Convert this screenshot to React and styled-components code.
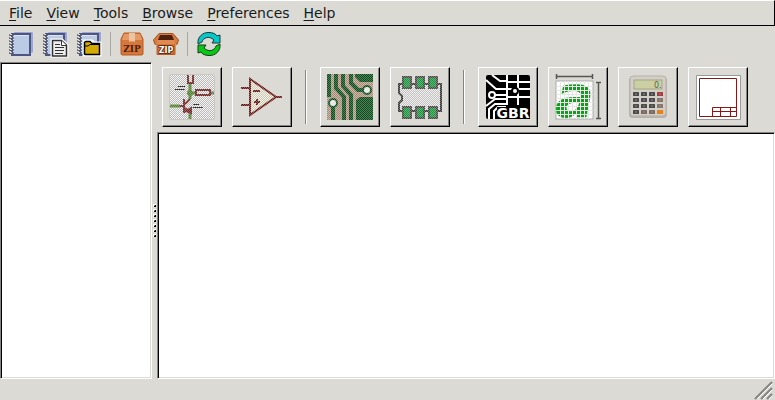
import React from "react";
import styled, { createGlobalStyle } from "styled-components";

const GlobalStyle = createGlobalStyle`
  * { box-sizing: border-box; }
  body { margin: 0; background: #dcdad5; }
`;

const Window = styled.div`
  display: flex;
  flex-direction: column;
  height: 100vh;
  overflow: hidden;
  background: #dcdad5;
  color: #1a1a1a;
  font: 14px/18px "DejaVu Sans", sans-serif;
`;

const MenuBar = styled.nav`
  display: flex;
  align-items: center;
  height: 26px;
  padding-left: 2px;
  border-top: 1px solid #fff;
  border-bottom: 1px solid #000;
  border-right: 1px solid #000;
`;

const MenuItem = styled.button`
  padding: 0 7px;
  border: 0;
  background: none;
  color: inherit;
  font: inherit;
`;

const Mnemonic = styled.span`
  text-decoration: underline;
  text-decoration-thickness: 1px;
  text-underline-offset: 2px;
  text-decoration-skip-ink: none;
`;

const Toolbar = styled.div`
  display: flex;
  align-items: center;
  gap: 10px;
  height: 36px;
  padding-left: 9px;
`;

const ToolButton = styled.button`
  display: flex;
  padding: 0;
  border: 0;
  background: none;
`;

const ToolSeparator = styled.span`
  width: 1px;
  height: 24px;
  margin: 0 -1px;
  background: #aaa8a4;
`;

const Workspace = styled.main`
  display: flex;
  flex: 1;
  min-height: 0;
`;

const Pane = styled.section`
  flex: ${(p) => (p.$width ? `0 0 ${p.$width}` : "1")};
  min-height: 0;
  background: #fff;
  border: 1px solid #fff;
  border-top-color: #868482;
  border-left-color: #868482;
  box-shadow: inset 1px 1px #000, inset -1px -1px #dcdad5;
`;

const Sash = styled.div`
  display: flex;
  flex-direction: column;
  align-items: center;
  justify-content: center;
  gap: 2px;
  width: 5px;
`;

const Grip = styled.span`
  width: 3px;
  height: 3px;
  background:
    linear-gradient(#868482, #868482) 1px 1px / 1px 1px no-repeat,
    linear-gradient(#000, #000) 1px 1px / 2px 2px no-repeat,
    #fff;
`;

const Content = styled.div`
  display: flex;
  flex: 1;
  flex-direction: column;
  min-width: 0;
`;

const Launcher = styled.div`
  display: flex;
  align-items: center;
  gap: 10px;
  height: 70px;
  padding-left: 5px;
`;

const LaunchButton = styled.button`
  display: flex;
  align-items: center;
  justify-content: center;
  width: 60px;
  height: 60px;
  padding: 0;
  border: 1px solid #000;
  border-top-color: #fff;
  border-left-color: #fff;
  background: #dcdad5;
  box-shadow: inset -1px -1px #868482;
`;

const LaunchSeparator = styled.span`
  width: 2px;
  height: 54px;
  margin: 0 3px;
  border-left: 1px solid #868482;
  border-right: 1px solid #fff;
`;

const StatusBar = styled.footer`
  display: flex;
  align-items: flex-end;
  justify-content: flex-end;
  height: 21px;
  padding: 0 3px 1px 0;
`;

const Icon = styled.svg.attrs((p) => ({
  viewBox: `0 0 ${p.$size} ${p.$size}`,
  width: p.$size,
  height: p.$size,
  "aria-hidden": true,
}))`
  display: block;
  overflow: visible;
`;

const Notebook = ({ children }) => (
  <Icon $size={24}>
    <path d="M5 0H24V21H22V2H5z" fill="#8b93c2" stroke="#dde0ee" strokeWidth=".5" />
    <rect x="3" y="2" width="18" height="21" fill="#bccbe5" stroke="#4d5584" strokeWidth="2" />
    <path d="M4.500 21.500V3.500H19.500" fill="none" stroke="#dde6f4" />
    {[3, 6, 9, 12, 15, 18, 21].map((y) => (
      <g key={y}>
        <rect x="0" y={y - 1} width="5" height="2" rx="1" fill="#55596c" />
        <path d={`M1 ${y - 0.5}h2`} stroke="#d5d7df" />
      </g>
    ))}
    {children}
  </Icon>
);

const NewFromTemplate = () => (
  <Notebook>
    <path d="M9 8H19L24 13V24H9z" fill="#fff" stroke="#fff" strokeWidth="3" />
    <path d="M9.500 8.500H18.500L23.500 13V24H9.500z" fill="#eee" stroke="#333" strokeWidth="1.500" />
    <path d="M18.500 8.500V13.500H23.500" fill="#fff" stroke="#333" />
    <path d="M12 12.500h5M12 15.500h9M12 18.500h9M12 21.500h8" stroke="#333" />
  </Notebook>
);

const OpenProject = () => (
  <Notebook>
    <path d="M7 9H15L17 11H23V23H7z" fill="#fff" stroke="#fff" strokeWidth="3" />
    <path d="M7.500 22V10.500L9 9.500H13L15 11.500H22.500V22.500H8.500z" fill="#d5aa05" stroke="#000" strokeWidth="1.500" />
    <path d="M8 14h3l2-1.500h9" fill="none" stroke="#000" />
  </Notebook>
);

const ZipBox = () => (
  <Icon $size={24}>
    <path d="M4 1H20L23 7V22L22 23H2L1 22V7z" fill="#d8773b" stroke="#b95a21" />
    <path d="M4 2H20L22 8H2z" fill="#e49a66" />
    <path d="M9 1h6v9l-2-1-1 1-1-1-2 1z" fill="#edc3a4" />
    <text x="12" y="20" textAnchor="middle" fill="#4d210b" fontFamily="DejaVu Serif" fontWeight="bold" fontSize="9">ZIP</text>
  </Icon>
);

const UnzipBox = () => (
  <Icon $size={24}>
    <path d="M3 11H21V22.500H3z" fill="#d8773b" stroke="#b95a21" />
    <path d="M5 1.500H19L24.500 8L23 12.500L21 11H3L1 12.500L-.500 8z" fill="#d77c42" stroke="#a84e19" />
    <path d="M6 3H18L20 8H4z" fill="#4d210b" />
    <path d="M4 8H20L22 12H2z" fill="#e08a50" />
    <path d="M4 13h16v9H4z" fill="#c96a30" />
    <text x="12" y="21" textAnchor="middle" fill="#fff" stroke="#4d210b" strokeWidth="1.500" paintOrder="stroke" fontFamily="DejaVu Sans" fontWeight="bold" fontSize="8">ZIP</text>
  </Icon>
);

const Refresh = () => (
  <Icon $size={24}>
    <path d="M1 12C0 5 6 0 12 .5C16 .5 19 2 20 4L23 3V11H15L17 8C12 3 6 6 5 10z" fill="#06c8c8" stroke="#183b3b" />
    <path d="M23 12C24 19 18 24 12 23.500C8 23.500 5 22 4 20L1 21V13H9L7 16C12 21 18 18 19 14z" fill="#06c815" stroke="#163c19" />
  </Icon>
);

const Stipple = ({ id, color = "#dcdad5", opacity = 0.8 }) => (
  <pattern id={id} width="2" height="2" patternUnits="userSpaceOnUse">
    <path d="M0 0h1v1H0zM1 1h1v1H1z" fill={color} opacity={opacity} shapeRendering="crispEdges" />
  </pattern>
);

const SchematicIcon = () => (
  <Icon $size={48}>
    <defs>
      <Stipple id="dots-schematic" color="#888" opacity={0.65} />
      <Stipple id="dots-schematic-top" opacity={0.3} />
    </defs>
    <rect x="1" y="1" width="46" height="46" rx="3" fill="#c9c8c5" />
    <rect x="2" y="2" width="44" height="44" rx="1" fill="#f6f6f6" />
    <rect x="2" y="2" width="44" height="44" fill="url(#dots-schematic)" />
    <g fill="none" strokeWidth="2">
      <path d="M22 11V26M22 20H27M43 20H46M2 33H12M22 41V46" stroke="#568536" strokeWidth="3" />
      <circle cx="22" cy="20" r="3" fill="#568536" stroke="none" />
      <path d="M20 2V10H25V2M28 17H42V22H28zM12 33H16M16 26V40M17 31L22 26M17 35L22 40" stroke="#762727" />
      <path d="M18 38L23 40V35z" fill="#762727" stroke="#762727" />
      <path d="M10 13.500H17M7 16.500H17M25 31.500H31M25 34.500H35" stroke="#222" strokeWidth="1" />
    </g>
    <path d="M2 2h44v44H2z" fill="url(#dots-schematic-top)" />
  </Icon>
);

const SymbolIcon = () => (
  <Icon $size={48}>
    <defs>
      <Stipple id="dots-symbol" color="#999482" opacity={0.6} />
      <Stipple id="dots-symbol-top" opacity={0.4} />
    </defs>
    <path d="M12 6V42L38 24z" fill="#f4f2e0" />
    <path d="M12 6V42L38 24z" fill="url(#dots-symbol)" />
    <g fill="none" stroke="#681212" strokeWidth="2">
      <path d="M12 6V42L38 24z" />
      <path d="M3 15H12M3 32H12M38 24H44M15 18H22M16 29H22M19 26V32" />
    </g>
    <path d="M0 0h48v48H0z" fill="url(#dots-symbol-top)" />
  </Icon>
);

const BoardIcon = () => (
  <Icon $size={48}>
    <defs><Stipple id="dots-board" opacity={0.35} /></defs>
    <path d="M1 1h46v46H1z" fill="#a98b73" />
    <path d="M1 1h46v46H1z" fill="url(#dots-board)" />
    <g fill="none" stroke="#0b4d1a" strokeWidth="4">
      <path d="M3 1V24M10 1V15L18 24V47M17 1V13L25 22V47M25 1V10L32 17H38M7 34V47" />
    </g>
    <path d="M29 1H47V9H34L29 4zM30 27L34 24H47V47H30z" fill="#0b4d1a" />
    <circle cx="41" cy="17" r="4" fill="#eee" stroke="#0b4d1a" strokeWidth="2" />
    <circle cx="7" cy="30" r="4" fill="#eee" stroke="#0b4d1a" strokeWidth="2" />
    <path d="M1 1h46v46H1z" fill="url(#dots-board)" />
  </Icon>
);

const FootprintIcon = () => (
  <Icon $size={48}>
    <defs>
      <Stipple id="dots-footprint" color="#888" opacity={0.6} />
      <Stipple id="dots-footprint-top" opacity={0.4} />
    </defs>
    <path d="M3 11H45V38H3V30L6 27V23L3 20z" fill="#f0f0f0" />
    <path d="M3 11H45V38H3V30L6 27V23L3 20z" fill="url(#dots-footprint)" stroke="#333" strokeWidth="2" />
    {[7, 20, 33].map((x) => (
      <g key={x} fill="#15983a" stroke="#474747" strokeWidth="2">
        <rect x={x} y="4" width="8" height="11" />
        <rect x={x} y="34" width="8" height="11" />
      </g>
    ))}
    <path d="M0 0h48v48H0z" fill="url(#dots-footprint-top)" />
  </Icon>
);

const GerberIcon = () => (
  <Icon $size={48}>
    <rect x="2" y="2" width="44" height="44" rx="2" fill="#000" />
    <path d="M8 2L16 8H22M2 7L12 16H22M11 22H22M2 33L11 26H22M5 46V36L11 31H22M10 46V38L14 34H22M23 2V32M34 2V32M23 9H46M23 16H46M23 24H46" fill="none" stroke="#fff" strokeWidth="2" />
    <circle cx="8" cy="22" r="3" fill="#000" stroke="#fff" strokeWidth="2" />
    <circle cx="31" cy="18" r="3" fill="#fff" stroke="#000" strokeWidth="2" />
    <path d="M13 34H46V46H13z" fill="#000" />
    <text x="29" y="45" textAnchor="middle" fill="#fff" fontFamily="DejaVu Sans" fontWeight="bold" fontSize="14">GBR</text>
  </Icon>
);

const ImageIcon = () => (
  <Icon $size={48}>
    <rect x="2" y="8" width="37" height="38" fill="#fff" stroke="#aaa" />
    <text x="1" y="44" fill="#00a80c" fontFamily="DejaVu Sans" fontWeight="bold" fontStyle="italic" fontSize="58">a</text>
    {[6, 10, 14, 18, 22, 26, 30, 34].map((n) => (
      <path key={n} d={`M${n + 0.5} 8V46M2 ${n + 7.5}H39`} stroke="#e6e6e6" />
    ))}
    <path d="M2.500 1V6M38.500 1V6M2 3.500H39M42 9.500H47M42 45.500H47M44.500 9V46" stroke="#555" strokeWidth="1.500" />
  </Icon>
);

const CalculatorIcon = () => (
  <Icon $size={48}>
    <rect x="5" y="4" width="38" height="41" rx="4" fill="#8f8b87" opacity=".5" />
    <rect x="6" y="3" width="36" height="40" rx="3" fill="#d3cec8" stroke="#b5afa8" />
    <rect x="10" y="7" width="28" height="9" fill="#cbd0a4" stroke="#a3a681" />
    <text x="30" y="15" fill="#5e634a" fontFamily="DejaVu Sans" fontSize="8">0.</text>
    {[0, 1, 2, 3].map((r) => [0, 1, 2, 3].map((c) => {
      const fill = c === 3 ? ["#a33b40", "#857469", "#857469", "#ed7d0c"][r] : r === 3 && c > 0 ? "#7a6a61" : "#4b4b4b";
      return (
        <g key={`${r}-${c}`}>
          <rect x={9 + c * 8} y={19 + r * 6} width="6" height="4" rx=".5" fill={fill} />
          <path d={`M${11 + c * 8} ${21 + r * 6}h2`} stroke="#aaa" strokeWidth=".7" />
        </g>
      );
    }))}
  </Icon>
);

const PageLayoutIcon = () => (
  <Icon $size={48}>
    <rect x="2" y="2" width="45" height="45" rx="1" fill="#999" />
    <rect x="3" y="3" width="43" height="43" fill="#fff" />
    <path d="M5.500 5.500H42.500V43.500H5.500zM18.500 43V34.500H43M18 38.500H43M26.500 34V43M36.500 34V43" fill="none" stroke="#8a1717" />
  </Icon>
);

const MENUS = ["File", "View", "Tools", "Browse", "Preferences", "Help"];

const TOOLS = [
  ["New project", Notebook],
  ["New project from template", NewFromTemplate],
  ["Open project", OpenProject],
  null,
  ["Archive project", ZipBox],
  ["Unarchive project", UnzipBox],
  null,
  ["Refresh", Refresh],
];

const LAUNCHERS = [
  ["Schematic editor", SchematicIcon],
  ["Symbol editor", SymbolIcon],
  null,
  ["Board editor", BoardIcon],
  ["Footprint editor", FootprintIcon],
  null,
  ["Gerber viewer", GerberIcon],
  ["Image converter", ImageIcon],
  ["Calculator", CalculatorIcon],
  ["Page layout editor", PageLayoutIcon],
];

export default function App() {
  return (
    <Window>
      <GlobalStyle />
      <MenuBar>
        {MENUS.map((name) => (
          <MenuItem key={name}><Mnemonic>{name[0]}</Mnemonic>{name.slice(1)}</MenuItem>
        ))}
      </MenuBar>
      <Toolbar>
        {TOOLS.map((tool, i) => {
          if (!tool) return <ToolSeparator key={i} />;
          const [label, Glyph] = tool;
          return <ToolButton key={i} aria-label={label}><Glyph /></ToolButton>;
        })}
      </Toolbar>
      <Workspace>
        <Pane $width="152px" aria-label="Project files" />
        <Sash>
          {[0, 1, 2, 3, 4, 5, 6].map((n) => <Grip key={n} />)}
        </Sash>
        <Content>
          <Launcher>
            {LAUNCHERS.map((item, i) => {
              if (!item) return <LaunchSeparator key={i} />;
              const [label, Glyph] = item;
              return <LaunchButton key={i} aria-label={label}><Glyph /></LaunchButton>;
            })}
          </Launcher>
          <Pane aria-label="Messages" />
        </Content>
      </Workspace>
      <StatusBar>
        <Icon $size={17}>
          <path d="M0 17L17 0M6 17L17 6M12 17L17 12" stroke="#868482" strokeWidth="2" />
          <path d="M2 17L17 2M8 17L17 8M14 17L17 14" stroke="#fff" />
        </Icon>
      </StatusBar>
    </Window>
  );
}
